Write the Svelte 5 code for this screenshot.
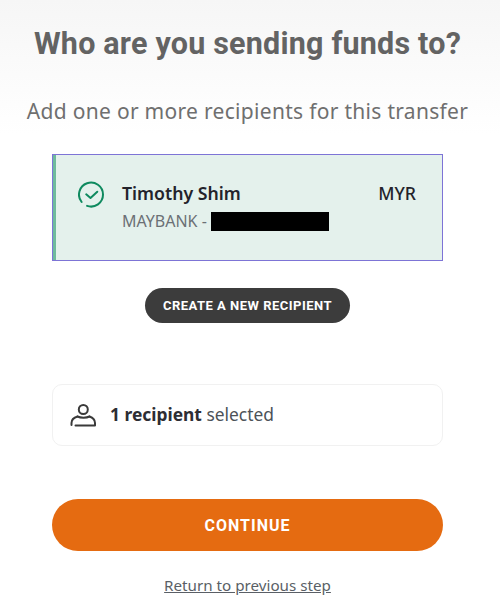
<script lang="ts">
  const recipient = { name: 'Timothy Shim', bank: 'MAYBANK', currency: 'MYR' };
  let count = 1;
</script>

<main class="page">
  <header class="hero">
    <h1>Who are you sending funds to?</h1>
    <p>Add one or more recipients for this transfer</p>
  </header>

  <section class="content">
    <div class="card">
      <svg class="check" viewBox="0 0 28 28" width="28" height="28" fill="none" stroke="#0f8a5f" stroke-width="2" stroke-linecap="round" stroke-linejoin="round">
        <path d="M9.100 24.900A12 12 0 1 0 3.600 21" />
        <path d="M8.200 13.300l4.300 3.700 6.800-6.300" />
      </svg>
      <div class="details">
        <div class="name-row">
          <span class="name">{recipient.name}</span>
          <span class="currency">{recipient.currency}</span>
        </div>
        <div class="account">{recipient.bank} - <span class="redacted"></span></div>
      </div>
    </div>

    <button class="create">CREATE A NEW RECIPIENT</button>

    <div class="summary">
      <svg viewBox="0 0 26 26" width="26" height="26" fill="none" stroke="#3a3a3a" stroke-width="2" stroke-linecap="round" stroke-linejoin="round">
        <circle cx="13.300" cy="7.500" r="4.500" />
        <path d="M7.500 14.500C4 15.500 1.500 17.500 1.500 21v2" />
        <path d="M5.500 23.500H25V21c0-3.500-2.500-5.500-5.500-6.500" />
        <path d="M7.500 14.500c3 1.500 9 1.500 12 0" />
      </svg>
      <span><b>{count} recipient</b> selected</span>
    </div>

    <button class="continue">CONTINUE</button>
    <a class="back" href="#back">Return to previous step</a>
  </section>
</main>

<style>
  :global(body) {
    margin: 0;
    background: #fff;
  }

  .page {
    width: 500px;
    height: 615px;
    overflow: hidden;
    font-family: "Noto Sans", "Open Sans", sans-serif;
  }

  .hero {
    height: 134px;
    box-sizing: border-box;
    padding: 25px 5px 0 0;
    text-align: center;
    background: linear-gradient(#f6f6f6, #fff);
  }

  h1 {
    margin: 0;
    font-family: Roboto, sans-serif;
    font-size: 30.500px;
    line-height: 38px;
    font-weight: 700;
    letter-spacing: 0.2px;
    color: #636363;
  }

  .hero p {
    margin: 34px 0 0;
    font-size: 21px;
    line-height: 28px;
    letter-spacing: 0.3px;
    color: #6f6f6f;
  }

  .content {
    display: flex;
    flex-direction: column;
    align-items: center;
    padding: 20px 57px 0 52px;
  }

  .card {
    box-sizing: border-box;
    width: 391px;
    height: 107px;
    display: flex;
    gap: 16px;
    padding: 26px 26px 0 25px;
    background: #e4f1ec;
    border: 1px solid #7d74d6;
    box-shadow: inset 3px 0 #6fbb9d;
  }

  .check {
    flex: none;
  }

  .details {
    flex: 1;
  }

  .name-row {
    display: flex;
    justify-content: space-between;
    font-size: 17.700px;
    line-height: 24px;
    font-weight: 600;
    color: #23232b;
  }

  .currency {
    font-weight: 500;
  }

  .account {
    display: flex;
    align-items: center;
    gap: 4px;
    margin-top: 6px;
    font-size: 16px;
    line-height: 20px;
    color: #6b7075;
  }

  .redacted {
    display: block;
    width: 118px;
    height: 19px;
    background: #000;
  }

  .create {
    width: 205px;
    height: 35px;
    margin-top: 27px;
    padding: 0;
    border: 0;
    border-radius: 18px;
    background: #3c3c3c;
    color: #fff;
    font-family: Roboto, sans-serif;
    font-size: 13px;
    font-weight: 700;
    letter-spacing: 0.5px;
  }

  .summary {
    box-sizing: border-box;
    width: 391px;
    height: 62px;
    margin-top: 61px;
    display: flex;
    align-items: center;
    gap: 14px;
    padding: 0 0 2px 17px;
    border: 1px solid #f1f1f1;
    border-radius: 10px;
    font-size: 17.400px;
    color: #4c5258;
  }

  .summary svg {
    margin-top: 2px;
  }

  .summary b {
    font-weight: 700;
    color: #2d2d33;
  }

  .continue {
    width: 391px;
    height: 52px;
    margin-top: 53px;
    padding: 0;
    border: 0;
    border-radius: 26px;
    background: #e56b11;
    color: #fff;
    font-family: Roboto, sans-serif;
    font-size: 16px;
    font-weight: 700;
    letter-spacing: 1px;
  }

  .back {
    margin-top: 24px;
    font-size: 15.200px;
    line-height: 20px;
    color: #5a5f66;
    text-decoration: underline;
  }
</style>
